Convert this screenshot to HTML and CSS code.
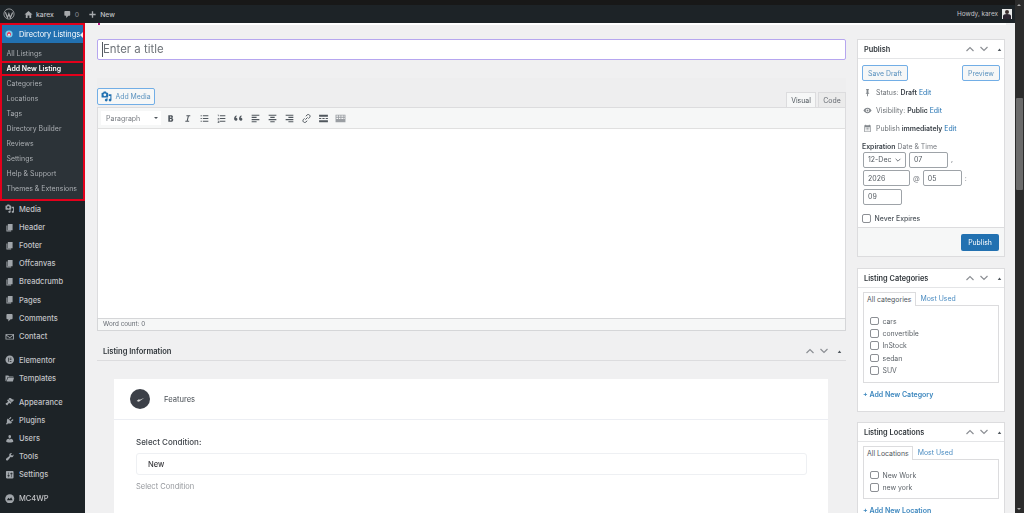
FILE: index.html
```html
<!DOCTYPE html>
<html lang="en">
<head>
<meta charset="utf-8">
<title>Add New Listing</title>
<link rel="stylesheet" href="styles.css">
</head>
<body>
<svg class="sprite" width="0" height="0">
  <symbol id="i-page" viewBox="0 0 20 20"><path d="M6 15V2h10v13H6zm-1 1h8v2H3V5h2v11z"/></symbol>
  <symbol id="i-comment" viewBox="0 0 20 20"><path d="M5 2h9q.82 0 1.41.59T16 4v7q0 .82-.59 1.41T14 13h-2l-5 5v-5H5q-.82 0-1.41-.59T3 11V4q0-.82.59-1.41T5 2z"/></symbol>
  <symbol id="i-media" viewBox="0 0 20 20"><path d="M13 11V4c0-.55-.45-1-1-1h-1.67L9 1H5L3.67 3H2c-.55 0-1 .45-1 1v7c0 .55.45 1 1 1h10c.55 0 1-.45 1-1zM7 4.5c1.38 0 2.5 1.12 2.5 2.5S8.38 9.5 7 9.5 4.5 8.38 4.5 7 5.62 4.5 7 4.5zM14 6h5v10.5c0 1.38-1.12 2.5-2.5 2.5S14 17.88 14 16.5s1.12-2.5 2.5-2.5c.17 0 .34.02.5.05V9h-3V6zm-4 8.05V13h2v3.5c0 1.38-1.12 2.5-2.5 2.5S7 17.88 7 16.5 8.12 14 9.5 14c.17 0 .34.02.5.05z"/></symbol>
  <symbol id="i-mail" viewBox="0 0 20 20"><path d="M2 4h16c.6 0 1 .4 1 1v10c0 .6-.4 1-1 1H2c-.6 0-1-.4-1-1V5c0-.6.4-1 1-1zm1 2l7 5 7-5v-.3H3zm0 2v6.3h14V8l-7 5z"/></symbol>
  <symbol id="i-folder" viewBox="0 0 20 20"><path d="M1 5V3.5C1 3 1.4 3 2 3h5l1.5 2H17c.6 0 1 .4 1 1v1H5L2.5 15H2c-.6 0-1-.4-1-1zm5 3h13l-2.5 8H3.500z"/></symbol>
  <symbol id="i-brush" viewBox="0 0 20 20"><path d="M14.480 11.060L7.410 3.990l1.500-1.500c.5-.56 2.300-.47 3.510.32 1.210.8 1.430 1.280 2.910 2.100 1.180.64 2.450 1.260 4.450.85zm-.71.71L6.700 4.700 4.930 6.470c-.39.39-.39 1.020 0 1.410l1.060 1.060c.39.39.39 1.030 0 1.420-.6.6-1.430 1.110-2.210 1.690-.35.26-.7.530-1.010.84C1.430 13.230.76 14.400 2 16l2.500 2c1-1 1.500-2.500 2.300-3.500.4-.5.9-1 1.400-1.500.39-.39 1.030-.39 1.420 0l1.060 1.060c.39.39 1.020.39 1.410 0z"/></symbol>
  <symbol id="i-plug" viewBox="0 0 20 20"><path d="M13.110 4.360L9.870 7.600 8 5.730l3.240-3.240c.35-.34 1.050-.2 1.560.32.52.51.66 1.210.31 1.550zm-8 1.770l.91-1.120 9.010 9.010-1.190.84c-.71.71-2.630 1.160-3.820 1.160H6.140L4.900 17.260c-.59.59-1.540.59-2.120 0-.59-.58-.59-1.530 0-2.120l1.240-1.240v-3.880c0-1.130.4-3.190 1.090-3.890zm7.260 3.970l3.240-3.240c.34-.35 1.040-.21 1.550.31.52.51.66 1.210.31 1.550l-3.240 3.250z"/></symbol>
  <symbol id="i-users" viewBox="0 0 20 20"><path d="M10 9.250c-2.270 0-2.730-3.440-2.730-3.440C7 4.020 7.820 2 9.970 2c2.160 0 2.980 2.020 2.710 3.810 0 0-.41 3.440-2.68 3.440zm0 2.570L12.720 10c2.390 0 4.520 2.330 4.520 4.530v2.490s-3.650 1.130-7.240 1.130c-3.650 0-7.240-1.130-7.240-1.130v-2.490c0-2.250 1.940-4.480 4.470-4.480z"/></symbol>
  <symbol id="i-tool" viewBox="0 0 20 20"><path d="M16.680 9.770c-1.340 1.340-3.300 1.670-4.950.99l-5.410 6.520c-.99.99-2.590.99-3.580 0s-.99-2.59 0-3.570l6.520-5.420c-.68-1.650-.35-3.610.99-4.950 1.280-1.280 3.120-1.620 4.720-1.060l-2.890 2.890 2.820 2.820 2.860-2.870c.53 1.580.18 3.390-1.080 4.650z"/></symbol>
  <symbol id="i-sliders" viewBox="0 0 20 20"><path d="M18 16V4c0-1.100-.9-2-2-2H4c-1.100 0-2 .9-2 2v12c0 1.100.9 2 2 2h12c1.100 0 2-.9 2-2zM8 11h1c.55 0 1 .45 1 1s-.45 1-1 1H8v1.500c0 .28-.22.5-.5.5s-.5-.22-.5-.5V13H6c-.55 0-1-.45-1-1s.45-1 1-1h1V5.500c0-.28.22-.5.5-.5s.5.22.5.5V11zm5-2h-1c-.55 0-1-.45-1-1s.45-1 1-1h1V5.500c0-.28.22-.5.5-.5s.5.22.5.5V7h1c.55 0 1 .45 1 1s-.45 1-1 1h-1v5.500c0 .28-.22.5-.5.5s-.5-.22-.5-.5V9z"/></symbol>
  <symbol id="i-up" viewBox="0 0 20 20"><path d="M3 14l7-7 7 7" fill="none" stroke="currentColor" stroke-width="2.400"/></symbol>
  <symbol id="i-down" viewBox="0 0 20 20"><path d="M3 6l7 7 7-7" fill="none" stroke="currentColor" stroke-width="2.400"/></symbol>
  <symbol id="i-tri" viewBox="0 0 20 20"><path d="M5 14l5-7 5 7z"/></symbol>
</svg>

<header class="adminbar">
  <div class="bar-left">
    <svg class="wp-logo" viewBox="0 0 20 20"><circle cx="10" cy="10" r="8.500" fill="none" stroke="currentColor" stroke-width="1.400"/><path d="M4 7l3.500 9 2.300-6.500L12.200 16 16 7.500" fill="none" stroke="currentColor" stroke-width="2"/></svg>
    <span class="bar-item"><svg class="bar-icon" viewBox="0 0 20 20"><path d="M10 2l9 8h-3v8h-4v-6H8v6H4v-8H1z"/></svg>karex</span>
    <span class="bar-item"><svg class="bar-icon"><use href="#i-comment"/></svg><span class="dim">0</span></span>
    <span class="bar-item"><svg class="bar-icon" viewBox="0 0 20 20"><path d="M8.500 3h3v5.500H17v3h-5.500V17h-3v-5.500H3v-3h5.500z"/></svg>New</span>
  </div>
  <div class="bar-right">Howdy, karex
    <svg class="avatar" viewBox="0 0 10 10"><rect width="10" height="10" fill="#e8e8e8"/><circle cx="5" cy="3" r="2" fill="#3a2c2c"/><path d="M1 10V7q0-2 4-2t4 2v3z" fill="#2c2430"/></svg>
  </div>
</header>

<div class="layout">
  <aside class="sidebar">
    <div class="dir-box">
      <div class="dir-head">
        <svg class="dir-icon" viewBox="0 0 20 20"><circle cx="10" cy="10" r="9" fill="#7fd0ea"/><path d="M5 14V8l5-4 5 4v6z" fill="#e5476a"/><rect x="8" y="10" width="4" height="4" fill="#fff"/></svg>
        <span>Directory Listings</span><i class="dir-arrow"></i>
      </div>
      <a class="sub sub-first">All Listings</a>
      <a class="sub sub-current">Add New Listing</a>
      <a class="sub">Categories</a>
      <a class="sub">Locations</a>
      <a class="sub">Tags</a>
      <a class="sub">Directory Builder</a>
      <a class="sub">Reviews</a>
      <a class="sub">Settings</a>
      <a class="sub">Help &amp; Support</a>
      <a class="sub">Themes &amp; Extensions</a>
    </div>
    <nav class="menu">
      <a class="item"><svg><use href="#i-media"/></svg>Media</a>
      <a class="item"><svg><use href="#i-page"/></svg>Header</a>
      <a class="item"><svg><use href="#i-page"/></svg>Footer</a>
      <a class="item"><svg><use href="#i-page"/></svg>Offcanvas</a>
      <a class="item"><svg><use href="#i-page"/></svg>Breadcrumb</a>
      <a class="item"><svg><use href="#i-page"/></svg>Pages</a>
      <a class="item"><svg><use href="#i-comment"/></svg>Comments</a>
      <a class="item"><svg><use href="#i-mail"/></svg>Contact</a>
      <a class="item gap"><svg viewBox="0 0 20 20"><circle cx="10" cy="10" r="9"/><path d="M7 6h1.500v8H7zm3 0h3.500v1.500H10zm0 3.200h3.500v1.500H10zm0 3.300h3.500V14H10z" fill="#1d2327"/></svg>Elementor</a>
      <a class="item"><svg><use href="#i-folder"/></svg>Templates</a>
      <a class="item gap"><svg><use href="#i-brush"/></svg>Appearance</a>
      <a class="item"><svg><use href="#i-plug"/></svg>Plugins</a>
      <a class="item"><svg><use href="#i-users"/></svg>Users</a>
      <a class="item"><svg><use href="#i-tool"/></svg>Tools</a>
      <a class="item"><svg><use href="#i-sliders"/></svg>Settings</a>
      <a class="item gap"><svg viewBox="0 0 20 20"><circle cx="10" cy="10" r="9.500"/><path d="M4 13l3-5 3 2.500L13 7l3 6z" fill="#1d2327"/></svg>MC4WP</a>
    </nav>
  </aside>

  <main class="content">
    <div class="notice-strip"><i class="pink"></i></div>
    <div class="columns">
      <section class="editor-col">
        <div class="title-input"><i class="caret"></i>Enter a title</div>
        <div class="editor">
          <div class="editor-tools">
            <span class="btn btn-media"><svg class="media-ico"><use href="#i-media"/></svg>Add Media</span>
            <div class="tabs"><span class="tab tab-on">Visual</span><span class="tab">Code</span></div>
          </div>
          <div class="toolbar">
            <span class="format">Paragraph<i class="caret-down"></i></span>
            <svg class="tb" viewBox="0 0 20 20"><path d="M6 4h5c2.500 0 3.500 1.200 3.500 3 0 1.200-.6 2-1.500 2.500 1.300.4 2 1.400 2 2.800 0 2.200-1.500 3.700-4 3.700H6zm3 2.400v2.400h1.500c.8 0 1.200-.5 1.200-1.200s-.4-1.200-1.200-1.200zm0 4.700v2.500h1.700c.9 0 1.400-.5 1.400-1.300s-.5-1.200-1.400-1.200z"/></svg>
            <svg class="tb" viewBox="0 0 20 20"><path d="M8 4h7v2h-2.500l-2 8H13v2H6v-2h2.500l2-8H8z"/></svg>
            <svg class="tb" viewBox="0 0 20 20"><path d="M3 4h2v2H3zm4 0h10v2H7zM3 9h2v2H3zm4 0h10v2H7zM3 14h2v2H3zm4 0h10v2H7z"/></svg>
            <svg class="tb" viewBox="0 0 20 20"><path d="M3 3h2v3H4V4H3zm4 1h10v2H7zM3 9h3v1l-2 1h2v1H3v-1l2-1H3zm4 0h10v2H7zm-4 5h3v4H3v-1h2v-.5H4v-1h1V15H3zm4 0h10v2H7z"/></svg>
            <svg class="tb" viewBox="0 0 20 20"><path d="M2 10c0-3 2-5 4.500-5.500l.5 1.500C5.800 6.500 5 7.500 5 8.500c2 0 3 1 3 2.700S6.800 14 5.200 14C3 14 2 12.300 2 10zm9 0c0-3 2-5 4.500-5.500l.5 1.500c-1.200.5-2 1.500-2 2.500 2 0 3 1 3 2.700S15.800 14 14.200 14C12 14 11 12.300 11 10z"/></svg>
            <svg class="tb" viewBox="0 0 20 20"><path d="M3 3h14v2H3zm0 4h9v2H3zm0 4h14v2H3zm0 4h9v2H3z"/></svg>
            <svg class="tb" viewBox="0 0 20 20"><path d="M3 3h14v2H3zm3 4h8v2H6zm-3 4h14v2H3zm3 4h8v2H6z"/></svg>
            <svg class="tb" viewBox="0 0 20 20"><path d="M3 3h14v2H3zm5 4h9v2H8zm-5 4h14v2H3zm5 4h9v2H8z"/></svg>
            <svg class="tb" viewBox="0 0 20 20"><path d="M8 12l4-4M9 6l2-2.500c1.500-1.200 3.300-1 4.500.2s1.400 3 .2 4.500L13.500 10M11 14l-2 2.500c-1.500 1.200-3.300 1-4.500-.2s-1.400-3-.2-4.500L6.500 10" fill="none" stroke="currentColor" stroke-width="1.800"/></svg>
            <svg class="tb" viewBox="0 0 20 20"><path d="M2 3h16v4H2zm0 10h16v4H2zM2 9h4v2H2zm6 0h4v2H8zm6 0h4v2h-4z"/></svg>
            <svg class="tb tb-faint" viewBox="0 0 20 20"><path d="M1 3h18v14H1zm1.500 1.500V7h3V4.500zm4.500 0V7h3V4.500zm4.500 0V7h3V4.500zm4 0V7h2V4.500zM2.500 8.500V11h3V8.500zm4.500 0V11h3V8.500zm4.500 0V11h3V8.500zm4 0V11h2V8.500z"/></svg>
          </div>
          <div class="editor-area"></div>
          <div class="word-count">Word count: 0</div>
        </div>

        <div class="info-head">
          <h2>Listing Information</h2>
          <div class="handles"><svg><use href="#i-up"/></svg><svg class="h-down"><use href="#i-down"/></svg><svg class="tri"><use href="#i-tri"/></svg></div>
        </div>
        <div class="card">
          <div class="card-head">
            <span class="card-dot"><svg viewBox="0 0 20 20"><path d="M3 12.500l4 1.500 10-7-8 3.500-2-1z"/></svg></span>
            <span>Features</span>
          </div>
          <div class="card-body">
            <label class="field-label">Select Condition:</label>
            <div class="field-input">New</div>
            <div class="field-hint">Select Condition</div>
          </div>
        </div>
      </section>

      <aside class="side-col">
        <section class="box box-publish">
          <div class="box-head"><h3>Publish</h3><div class="handles"><svg><use href="#i-up"/></svg><svg class="h-down"><use href="#i-down"/></svg><svg class="tri"><use href="#i-tri"/></svg></div></div>
          <div class="pub-body">
            <div class="pub-actions"><span class="btn btn-draft">Save Draft</span><span class="btn btn-preview">Preview</span></div>
            <div class="pub-row pub-row-first"><svg class="pub-ico" viewBox="0 0 20 20"><path d="M7 2h6v2l-1 1v5l2 2v1h-3v5l-1 1-1-1v-5H6v-1l2-2V5L7 4z"/></svg><span>Status: <b>Draft</b> <a>Edit</a></span></div>
            <div class="pub-row"><svg class="pub-ico" viewBox="0 0 20 20"><path d="M10 4c4 0 7.500 3 9 6-1.500 3-5 6-9 6s-7.500-3-9-6c1.500-3 5-6 9-6zm0 2a4 4 0 100 8 4 4 0 000-8zm0 2a2 2 0 110 4 2 2 0 010-4z" fill-rule="evenodd"/></svg><span>Visibility: <b>Public</b> <a>Edit</a></span></div>
            <div class="pub-row"><svg class="pub-ico" viewBox="0 0 20 20"><path d="M3 3h2V1.500h2V3h6V1.500h2V3h2v15H3zm1.500 4v9.500h11V7zM6 8.500h2v2H6zm3 0h2v2H9zm3 0h2v2h-2zM6 12h2v2H6zm3 0h2v2H9zm3 0h2v2h-2z"/></svg><span>Publish <b>immediately</b> <a>Edit</a></span></div>
            <div class="exp-label"><b>Expiration</b> Date &amp; Time</div>
            <div class="exp-row"><span class="inp inp-select">12-Dec<svg viewBox="0 0 20 20"><path d="M4 7l6 6 6-6" fill="none" stroke="currentColor" stroke-width="2"/></svg></span><span class="inp inp-sm">07</span><span class="sep">,</span></div>
            <div class="exp-row"><span class="inp inp-year">2026</span><span class="sep">@</span><span class="inp inp-sm">05</span><span class="sep">:</span></div>
            <div class="exp-row"><span class="inp inp-sm">09</span></div>
            <label class="check-row check-never"><i class="check"></i><span>Never Expires</span></label>
          </div>
          <div class="pub-foot"><span class="btn btn-primary">Publish</span></div>
        </section>

        <section class="box box-cats">
          <div class="box-head"><h3>Listing Categories</h3><div class="handles"><svg><use href="#i-up"/></svg><svg class="h-down"><use href="#i-down"/></svg><svg class="tri"><use href="#i-tri"/></svg></div></div>
          <div class="tax">
            <div class="tax-tabs"><span class="tax-tab">All categories</span><a>Most Used</a></div>
            <div class="tax-list tax-cats">
              <label class="check-row"><i class="check"></i>cars</label>
              <label class="check-row"><i class="check"></i>convertible</label>
              <label class="check-row"><i class="check"></i>InStock</label>
              <label class="check-row"><i class="check"></i>sedan</label>
              <label class="check-row"><i class="check"></i>SUV</label>
            </div>
            <a class="add-new">+ Add New Category</a>
          </div>
        </section>

        <section class="box">
          <div class="box-head"><h3>Listing Locations</h3><div class="handles"><svg><use href="#i-up"/></svg><svg class="h-down"><use href="#i-down"/></svg><svg class="tri"><use href="#i-tri"/></svg></div></div>
          <div class="tax">
            <div class="tax-tabs"><span class="tax-tab">All Locations</span><a>Most Used</a></div>
            <div class="tax-list tax-locs">
              <label class="check-row"><i class="check"></i>New Work</label>
              <label class="check-row"><i class="check"></i>new york</label>
            </div>
            <a class="add-new">+ Add New Location</a>
          </div>
        </section>
      </aside>
    </div>
  </main>
  <div class="scrollbar"><i class="arrow-up"></i><i class="thumb"></i><i class="arrow-down"></i></div>
</div>
</body>
</html>
```
FILE: styles.css
```css
* { box-sizing: border-box; }
html, body { margin: 0; height: 513px; overflow: hidden; }
body {
  font-family: Inter, "Liberation Sans", sans-serif;
  font-size: 6.900px;
  color: #3c434a;
  background: #f0f0f1;
  display: flex;
  flex-direction: column;
  filter: blur(0.45px);
}
.sprite { position: absolute; }
svg { fill: currentColor; display: block; }
a { color: #2271b1; }
b { font-weight: 600; }

/* admin bar */
.adminbar {
  height: 23px;
  flex: none;
  background: #1d2327;
  border-top: 5px solid #181818;
  color: #c3c4c7;
  font-size: 6.400px;
  display: flex;
  justify-content: space-between;
  align-items: center;
  padding: 0 12px 0 3px;
}
.bar-left { display: flex; align-items: center; }
.wp-logo { width: 12px; height: 12px; color: #a7aaad; margin-right: 9px; }
.bar-item { display: flex; align-items: center; gap: 3px; margin-right: 9px; font-weight: 500; font-size: 6.800px; }
.bar-icon { width: 9px; height: 9px; color: #a7aaad; }
.dim { color: #787c82; }
.bar-right { display: flex; align-items: center; gap: 4px; }
.avatar { width: 10px; height: 10px; }

/* layout */
.layout { flex: 1; display: flex; min-height: 0; }
.sidebar { width: 85px; flex: none; background: #1d2327; color: #dcdcde; }
.dir-box { height: 178px; border: 2px solid #e3001b; background: #2c3338; position: relative; }
.dir-head {
  height: 18px;
  background: #2271b1;
  color: #fff;
  display: flex;
  align-items: center;
  padding-left: 3px;
  font-size: 7.400px;
  white-space: nowrap;
}
.dir-icon { width: 8px; height: 8px; margin-right: 6px; flex: none; }
.dir-arrow { position: absolute; right: 0; top: 7px; border: 3px solid transparent; border-right-color: #f0f0f1; border-left: 0; }
.sub { display: block; height: 15px; line-height: 15px; padding-left: 4.500px; color: #a9adb1; white-space: nowrap; font-size: 6.950px; }
.sub-first { margin-top: 3px; }
.sub-current {
  color: #fff;
  font-weight: 600;
  line-height: 11px;
  background: #242a2f;
  border-top: 2px solid #e3001b;
  border-bottom: 2px solid #e3001b;
}
.menu { margin-top: -1px; }
.item { display: flex; align-items: center; height: 18.200px; padding-left: 5px; color: #c3c4c7; white-space: nowrap; font-size: 7.500px; font-weight: 500; }
.item svg { width: 9.500px; height: 9.500px; margin-right: 4.500px; flex: none; color: #a0a5aa; }
.item.gap { margin-top: 5.600px; }

/* content */
.content { flex: 1; min-width: 0; display: flex; flex-direction: column; }
.notice-strip { height: 2px; flex: none; margin-left: 12px; margin-right: 9px; background: #fff; position: relative; }
.pink { position: absolute; left: 1px; top: 0; width: 2px; height: 2px; background: #b3127f; }
.columns { display: flex; flex: none; gap: 11px; padding: 14px 10px 0 12px; }
.editor-col { width: 749px; flex: none; }
.side-col { width: 148px; flex: none; }

.title-input {
  height: 21px;
  background: #fff;
  border: 1px solid #b6a6ef;
  border-radius: 2px;
  font-size: 11.400px;
  line-height: 19px;
  color: #6d7278;
  padding-left: 4px;
  display: flex;
}
.caret { width: 1px; height: 15px; margin-top: 2px; background: #50575e; }

.editor { margin-top: 18px; }
.editor-tools { height: 29px; background: #eeeeef; display: flex; justify-content: space-between; align-items: flex-end; }
.btn { display: inline-flex; align-items: center; justify-content: center; border-radius: 2px; font-size: 6.900px; }
.btn-media { width: 58px; height: 17px; margin-bottom: 2px; border: 1px solid #72aee6; background: #f6f7f7; color: #5a92bf; gap: 3px; }
.media-ico { width: 11px; height: 11px; color: #2271b1; }
.tabs { display: flex; gap: 2px; }
.tab { width: 28px; height: 15px; display: flex; align-items: center; justify-content: center; background: #ebebeb; border: 1px solid #dcdcde; border-bottom: 0; color: #646970; }
.tab-on { width: 30px; background: #f6f7f7; color: #50575e; }
.toolbar { height: 22px; background: #f6f7f7; border: 1px solid #dcdcde; border-bottom: 1px solid #e0e0e0; display: flex; align-items: center; padding-left: 3px; color: #50575e; }
.format { width: 60px; height: 14px; background: #fff; display: flex; align-items: center; justify-content: space-between; padding: 0 3px 0 5px; color: #787c82; margin-right: .500px; font-size: 7px; }
.caret-down { border: 2.500px solid transparent; border-top-color: #50575e; border-bottom: 0; }
.tb { width: 11px; height: 11px; margin: 0 3px; flex: none; }
.tb-faint { color: #9a9ea3; }
.editor-area { height: 189px; background: #fff; border-left: 1px solid #dcdcde; border-right: 1px solid #dcdcde; }
.word-count { height: 13px; background: #f6f7f7; border: 1px solid #d5d6d8; color: #646970; font-size: 6.350px; line-height: 11px; padding-left: 5px; }

.info-head { height: 30px; border-bottom: 1px solid #dcdcde; display: flex; justify-content: space-between; align-items: center; padding: 11px 3.500px 0 6px; }
h2, h3 { margin: 0; font-weight: 600; color: #2f353a; }
h2 { font-size: 7.550px; }
h3 { font-size: 7.350px; }
.handles { display: flex; align-items: center; gap: 4px; color: #8c8f94; }
.handles svg { width: 10px; height: 10px; }
.handles .tri { width: 7px; height: 7px; margin-left: 2.500px; color: #50575e; }

.card { margin: 18px 18px 0 17px; background: #fff; height: 140px; }
.card-head { height: 41px; border-bottom: 1px solid #eceef3; display: flex; align-items: center; gap: 14px; padding-left: 16px; color: #4b5157; font-size: 7.600px; }
.card-dot { width: 20px; height: 20px; border-radius: 50%; background: #3c4048; color: #d8d8d8; display: flex; align-items: center; justify-content: center; }
.card-dot svg { width: 11px; height: 11px; }
.card-body { padding: 17px 21px 0 22px; }
.field-label { display: block; font-size: 8px; font-weight: 500; color: #3d4248; line-height: 10px; }
.field-input { height: 22px; margin-top: 6px; border: 1px solid #eef0f3; border-radius: 3px; padding-left: 11px; line-height: 21px; font-size: 7.600px; font-weight: 500; color: #3c3c40; }
.field-hint { margin-top: 7px; color: #94979c; font-size: 7.500px; line-height: 10px; }

/* side boxes */
.box { background: #fff; border: 1px solid #dcdcde; margin-bottom: 10px; }
.box-head { height: 19px; border-bottom: 1px solid #e4e5e7; display: flex; justify-content: space-between; align-items: center; padding: 0 1.500px 0 6px; }
.box-publish { height: 218px; display: flex; flex-direction: column; margin-bottom: 11px; }
.pub-body { flex: 1; padding: 6px 4px 0 4px; }
.pub-actions { display: flex; justify-content: space-between; }
.btn-draft { width: 46px; height: 16px; border: 1px solid #72aee6; background: #f6f7f7; color: #5a92bf; }
.btn-preview { width: 38px; height: 16px; border: 1px solid #72aee6; background: #f6f7f7; color: #5a92bf; }
.pub-row { display: flex; align-items: center; height: 18.200px; color: #6b7075; }
.pub-row-first { margin-top: 2px; }
.pub-ico { width: 9px; height: 9px; margin: 0 4px 0 1px; color: #82878c; }
.pub-row b { color: #3c434a; }
.exp-label { margin-top: 4px; height: 10px; line-height: 10px; color: #787c82; }
.exp-label b { color: #3c434a; }
.exp-row { display: flex; align-items: center; gap: 3px; color: #787c82; margin: 0 0 2.500px 1px; }
.inp { height: 16px; border: 1px solid #9ea3a8; border-radius: 2px; background: #fff; display: flex; align-items: center; padding-left: 4px; color: #50575e; font-size: 7px; white-space: nowrap; }
.inp-select { width: 43px; justify-content: space-between; padding-right: 3px; }
.inp-select svg { width: 8px; height: 8px; }
.inp-sm { width: 39px; }
.inp-year { width: 47px; }
.sep { font-size: 7px; }
.check-row { display: flex; align-items: center; gap: 4px; color: #5d6369; }
.check { width: 8.500px; height: 8.500px; background: #fff; border: 1px solid #8c8f94; border-radius: 2px; flex: none; }
.check-never { margin-top: 9px; height: 10px; font-weight: 500; color: #50575e; }
.pub-foot { height: 29px; flex: none; border-top: 1px solid #dcdcde; background: #f6f7f7; display: flex; justify-content: flex-end; align-items: center; padding-right: 5px; }
.btn-primary { width: 38px; height: 17px; background: #2271b1; color: #fff; }

.tax { padding: 4px 5px 0 5px; }
.tax-tabs { display: flex; align-items: flex-end; height: 13px; gap: 5px; }
.tax-tab { height: 14px; padding: 0 3px; border: 1px solid #dcdcde; border-bottom: 0; background: #fff; margin-bottom: -1px; position: relative; color: #50575e; line-height: 13px; }
.tax-tabs a { line-height: 13px; color: #4c8dc2; }
.tax-list { border: 1px solid #dcdcde; padding: 9px 0 0 6px; }
.tax-cats { height: 78px; }
.tax-locs { height: 40px; }
.tax-list .check-row { height: 12.300px; }
.add-new { display: block; margin-top: 7px; height: 10px; line-height: 10px; font-weight: 600; color: #3a85bd; font-size: 7px; }
.box-cats { height: 144px; }

/* scrollbar */
.scrollbar { width: 9px; flex: none; background: #2b2b2b; margin-top: -23px; position: relative; }
.thumb { position: absolute; left: 1px; right: 1px; top: 98px; height: 92px; background: #6b6b6b; border-radius: 1px; }
.arrow-up { position: absolute; left: 2px; top: 4px; border: 2.500px solid transparent; border-bottom-color: #a5a5a5; border-top: 0; }
.arrow-down { position: absolute; left: 2px; bottom: 3px; border: 2.500px solid transparent; border-top-color: #a5a5a5; border-bottom: 0; }
```
